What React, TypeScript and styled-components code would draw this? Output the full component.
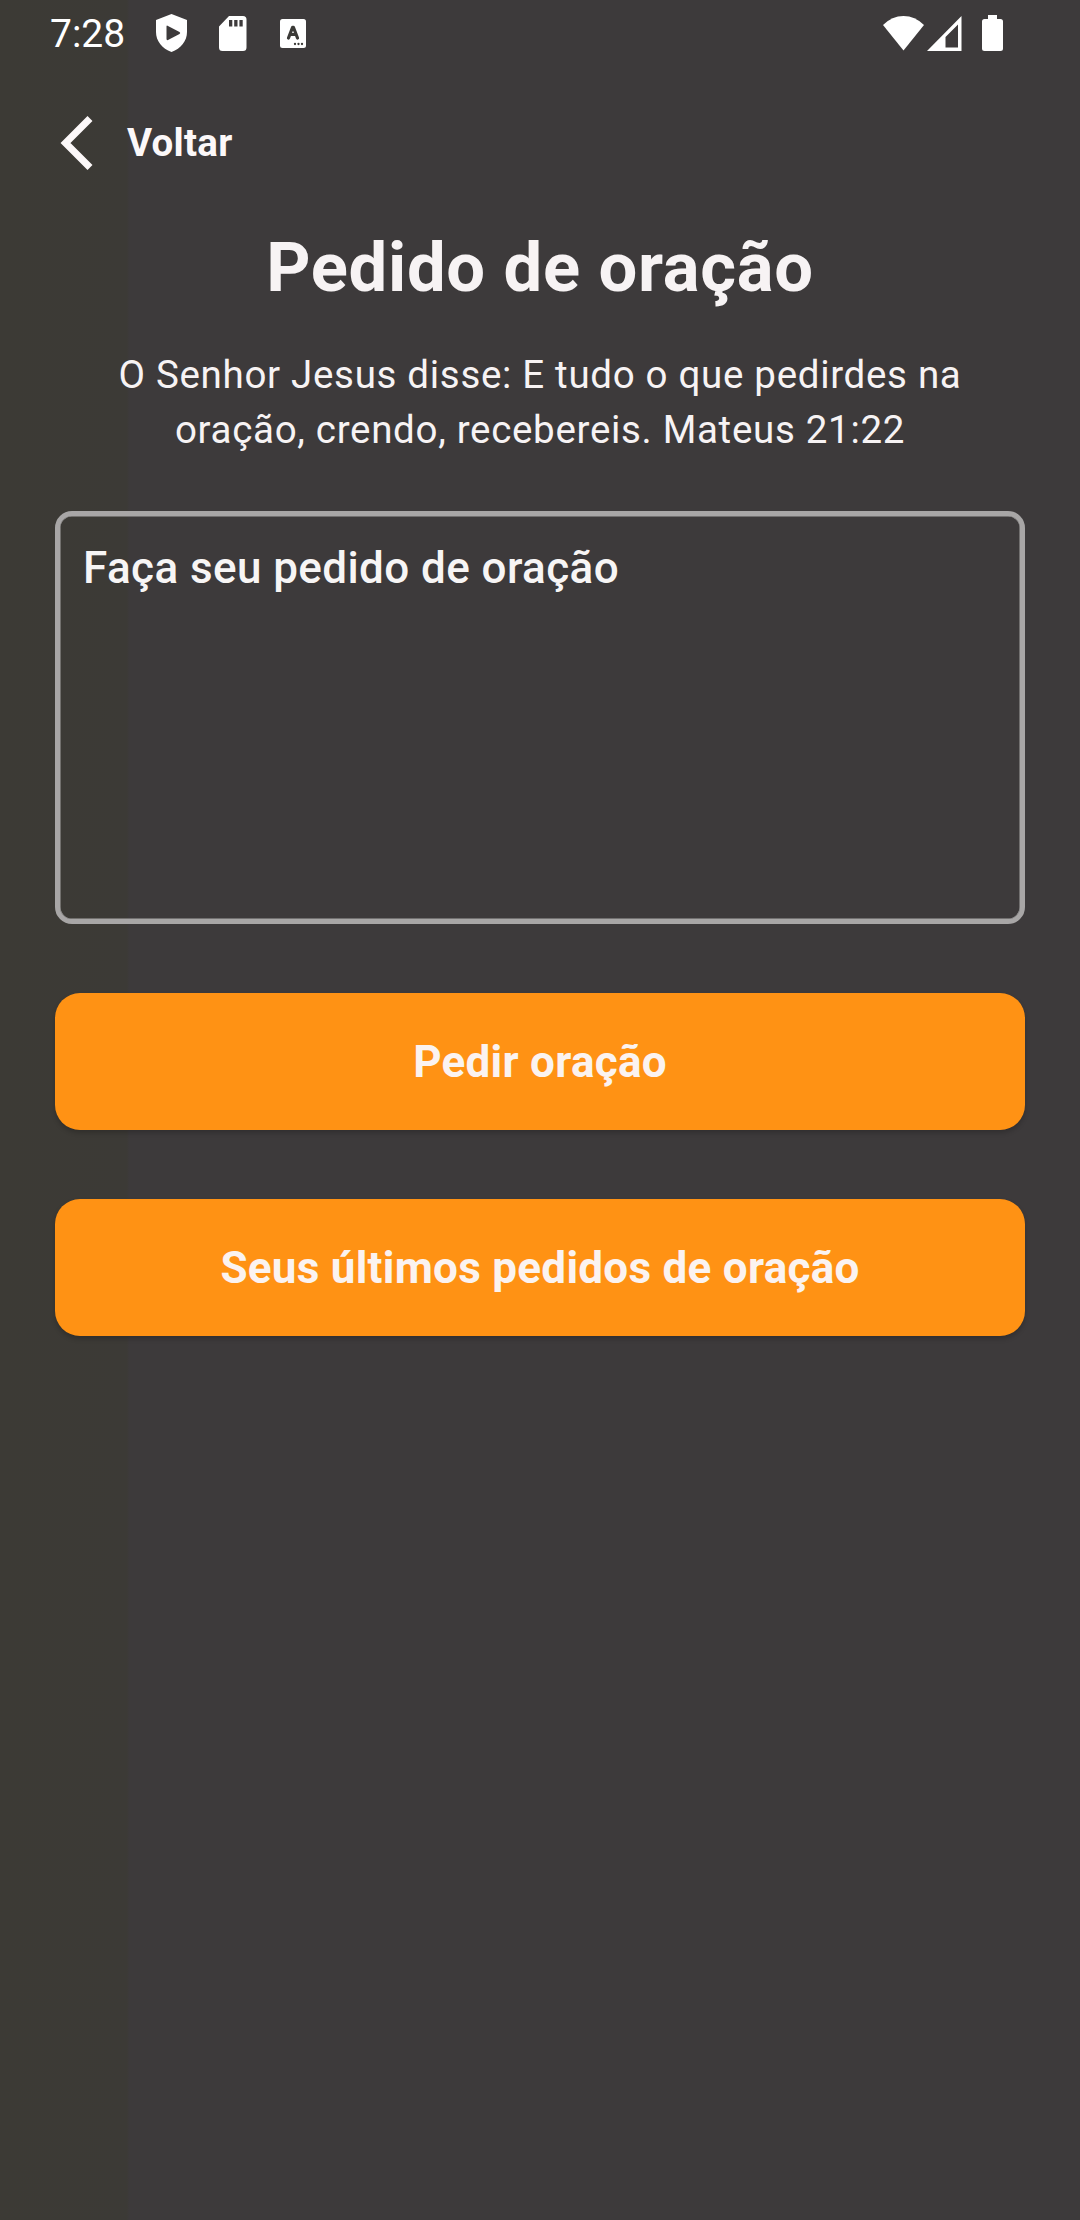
import React from "react";
import styled, { createGlobalStyle } from "styled-components";

const GlobalStyle = createGlobalStyle`
  *, *::before, *::after { box-sizing: border-box; }
  html, body { margin: 0; background: #3d3a3b; }
  body { font-family: Roboto, "Liberation Sans", sans-serif; color: #f7f3f4; }
`;

const Screen = styled.div`
  display: flex;
  flex-direction: column;
  width: 1080px;
  height: 2220px;
  overflow: hidden;
  background: linear-gradient(90deg, #3c3a35 0, #3c3a36 127px, #3d3a3b 129px, #3d3a3b 100%);
`;

const StatusBar = styled.header`
  display: flex;
  align-items: center;
  justify-content: space-between;
  height: 66px;
  padding: 0 77px 0 50px;
  color: #fff;
`;

const StatusGroup = styled.div`
  display: flex;
  align-items: center;
`;

const Clock = styled.span`
  font-size: 39px;
  line-height: 66px;
  padding-top: 2px;
  width: 76px;
  margin-right: 30px;
  white-space: nowrap;
`;

const Icon = styled.svg<{ $after?: number }>`
  display: block;
  flex: none;
  margin-right: ${(p) => p.$after ?? 0}px;
`;

const BackButton = styled.button`
  display: flex;
  align-items: center;
  align-self: flex-start;
  height: 56px;
  margin: 49px 0 0 60px;
  padding: 0;
  gap: 34px;
  border: 0;
  background: none;
  color: #fcf8f9;
  font: 700 38.5px/56px Roboto, "Liberation Sans", sans-serif;
  letter-spacing: 0.275px;
`;

const Main = styled.main`
  display: flex;
  flex-direction: column;
  padding: 0 55px;
`;

const Title = styled.h1`
  margin: 57px 0 0;
  text-align: center;
  font-size: 68.75px;
  line-height: 80px;
  font-weight: 700;
  letter-spacing: 0.69px;
`;

const Verse = styled.p`
  margin: 39px 0 0;
  text-align: center;
  font-size: 38.5px;
  line-height: 55px;
  letter-spacing: 0.69px;
`;

const RequestField = styled.textarea`
  display: block;
  width: 970px;
  height: 413px;
  margin: 54px 0 0;
  padding: 24px 23px;
  border: 5px solid #a8a6a6;
  border-radius: 17px;
  box-shadow: inset 0 0 0 0.5px #a8a6a6;
  background: transparent;
  color: inherit;
  resize: none;
  outline: 0;
  font: 500 44px/56px Roboto, "Liberation Sans", sans-serif;
  letter-spacing: 0.41px;
  &::placeholder { color: #f7f5f5; opacity: 1; }
`;

const ActionButton = styled.button`
  height: 137px;
  margin: 69px 0 0;
  padding: 0;
  border: 0;
  border-radius: 25px;
  background: #ff9214;
  color: #fbf3f0;
  box-shadow: 0 3px 5px rgba(0, 0, 0, 0.2);
  font: 700 44px/56px Roboto, "Liberation Sans", sans-serif;
  letter-spacing: 0.275px;
`;

const ShieldIcon = () => (
  <Icon $after={31} width="32" height="38" viewBox="0 0 32 38">
    <path fill="#fff" fillRule="evenodd" d="M15.500 0L31 6V18C31 27 25 34.500 15.500 38C6 34.500 0 27 0 18V6ZM10.500 12.500Q10.500 11 12 12L23.500 18Q25 19 23.500 20L12 26Q10.500 26.500 10.500 25Z" />
  </Icon>
);

const SdCardIcon = () => (
  <Icon $after={33} width="28" height="35" viewBox="0 0 28 35">
    <path fill="#fff" fillRule="evenodd" d="M10 0H24Q27.500 0 27.500 3.500V31.500Q27.500 35 24 35H3.500Q0 35 0 31.500V10.500ZM10 4V10.500H13.300V4ZM15.200 4V10.500H18.500V4ZM20.400 4V10.500H23.700V4Z" />
  </Icon>
);

const TextIcon = () => (
  <Icon width="26" height="29" viewBox="0 0 26 29">
    <rect width="26" height="29" rx="2.500" fill="#fff" />
    <path d="M8.500 19L12.600 8.300H13.400L17.500 19M10 15.500H16" fill="none" stroke="#3b3a37" strokeWidth="3.200" strokeLinecap="round" strokeLinejoin="round" />
    <g fill="#3b3a37">
      <circle cx="15" cy="25" r="1.150" />
      <circle cx="18.500" cy="25" r="1.150" />
      <circle cx="22" cy="25" r="1.150" />
    </g>
  </Icon>
);

const WifiIcon = () => (
  <Icon $after={3} width="41" height="35" viewBox="0 0 41 35">
    <path fill="#fff" d="M0 9Q9 0 20.500 0T41 9L20.500 34.500Z" />
  </Icon>
);

const SignalIcon = () => (
  <Icon $after={20} width="35" height="35" viewBox="0 0 35 35">
    <path fill="#fff" fillRule="evenodd" d="M34.500 0V35H0ZM31 8.500L18.500 21V31.500H31Z" />
  </Icon>
);

const BatteryIcon = () => (
  <Icon width="21" height="36" viewBox="0 0 21 36">
    <path fill="#fff" d="M6 0H15V4H18.500Q21 4 21 6.500V33.500Q21 36 18.500 36H2.500Q0 36 0 33.500V6.500Q0 4 2.500 4H6Z" />
  </Icon>
);

const ChevronIcon = () => (
  <Icon width="33" height="56" viewBox="0 0 33 56">
    <path d="M30 3.500L5.500 28L30 52.500" fill="none" stroke="#fcf8f9" strokeWidth="7" />
  </Icon>
);

export default function App() {
  return (
    <>
      <GlobalStyle />
      <Screen>
        <StatusBar>
          <StatusGroup>
            <Clock>7:28</Clock>
            <ShieldIcon />
            <SdCardIcon />
            <TextIcon />
          </StatusGroup>
          <StatusGroup>
            <WifiIcon />
            <SignalIcon />
            <BatteryIcon />
          </StatusGroup>
        </StatusBar>
        <BackButton>
          <ChevronIcon />
          Voltar
        </BackButton>
        <Main>
          <Title>Pedido de oração</Title>
          <Verse>
            O Senhor Jesus disse: E tudo o que pedirdes na
            <br />
            oração, crendo, recebereis. Mateus 21:22
          </Verse>
          <RequestField placeholder="Faça seu pedido de oração" />
          <ActionButton>Pedir oração</ActionButton>
          <ActionButton>Seus últimos pedidos de oração</ActionButton>
        </Main>
      </Screen>
    </>
  );
}
